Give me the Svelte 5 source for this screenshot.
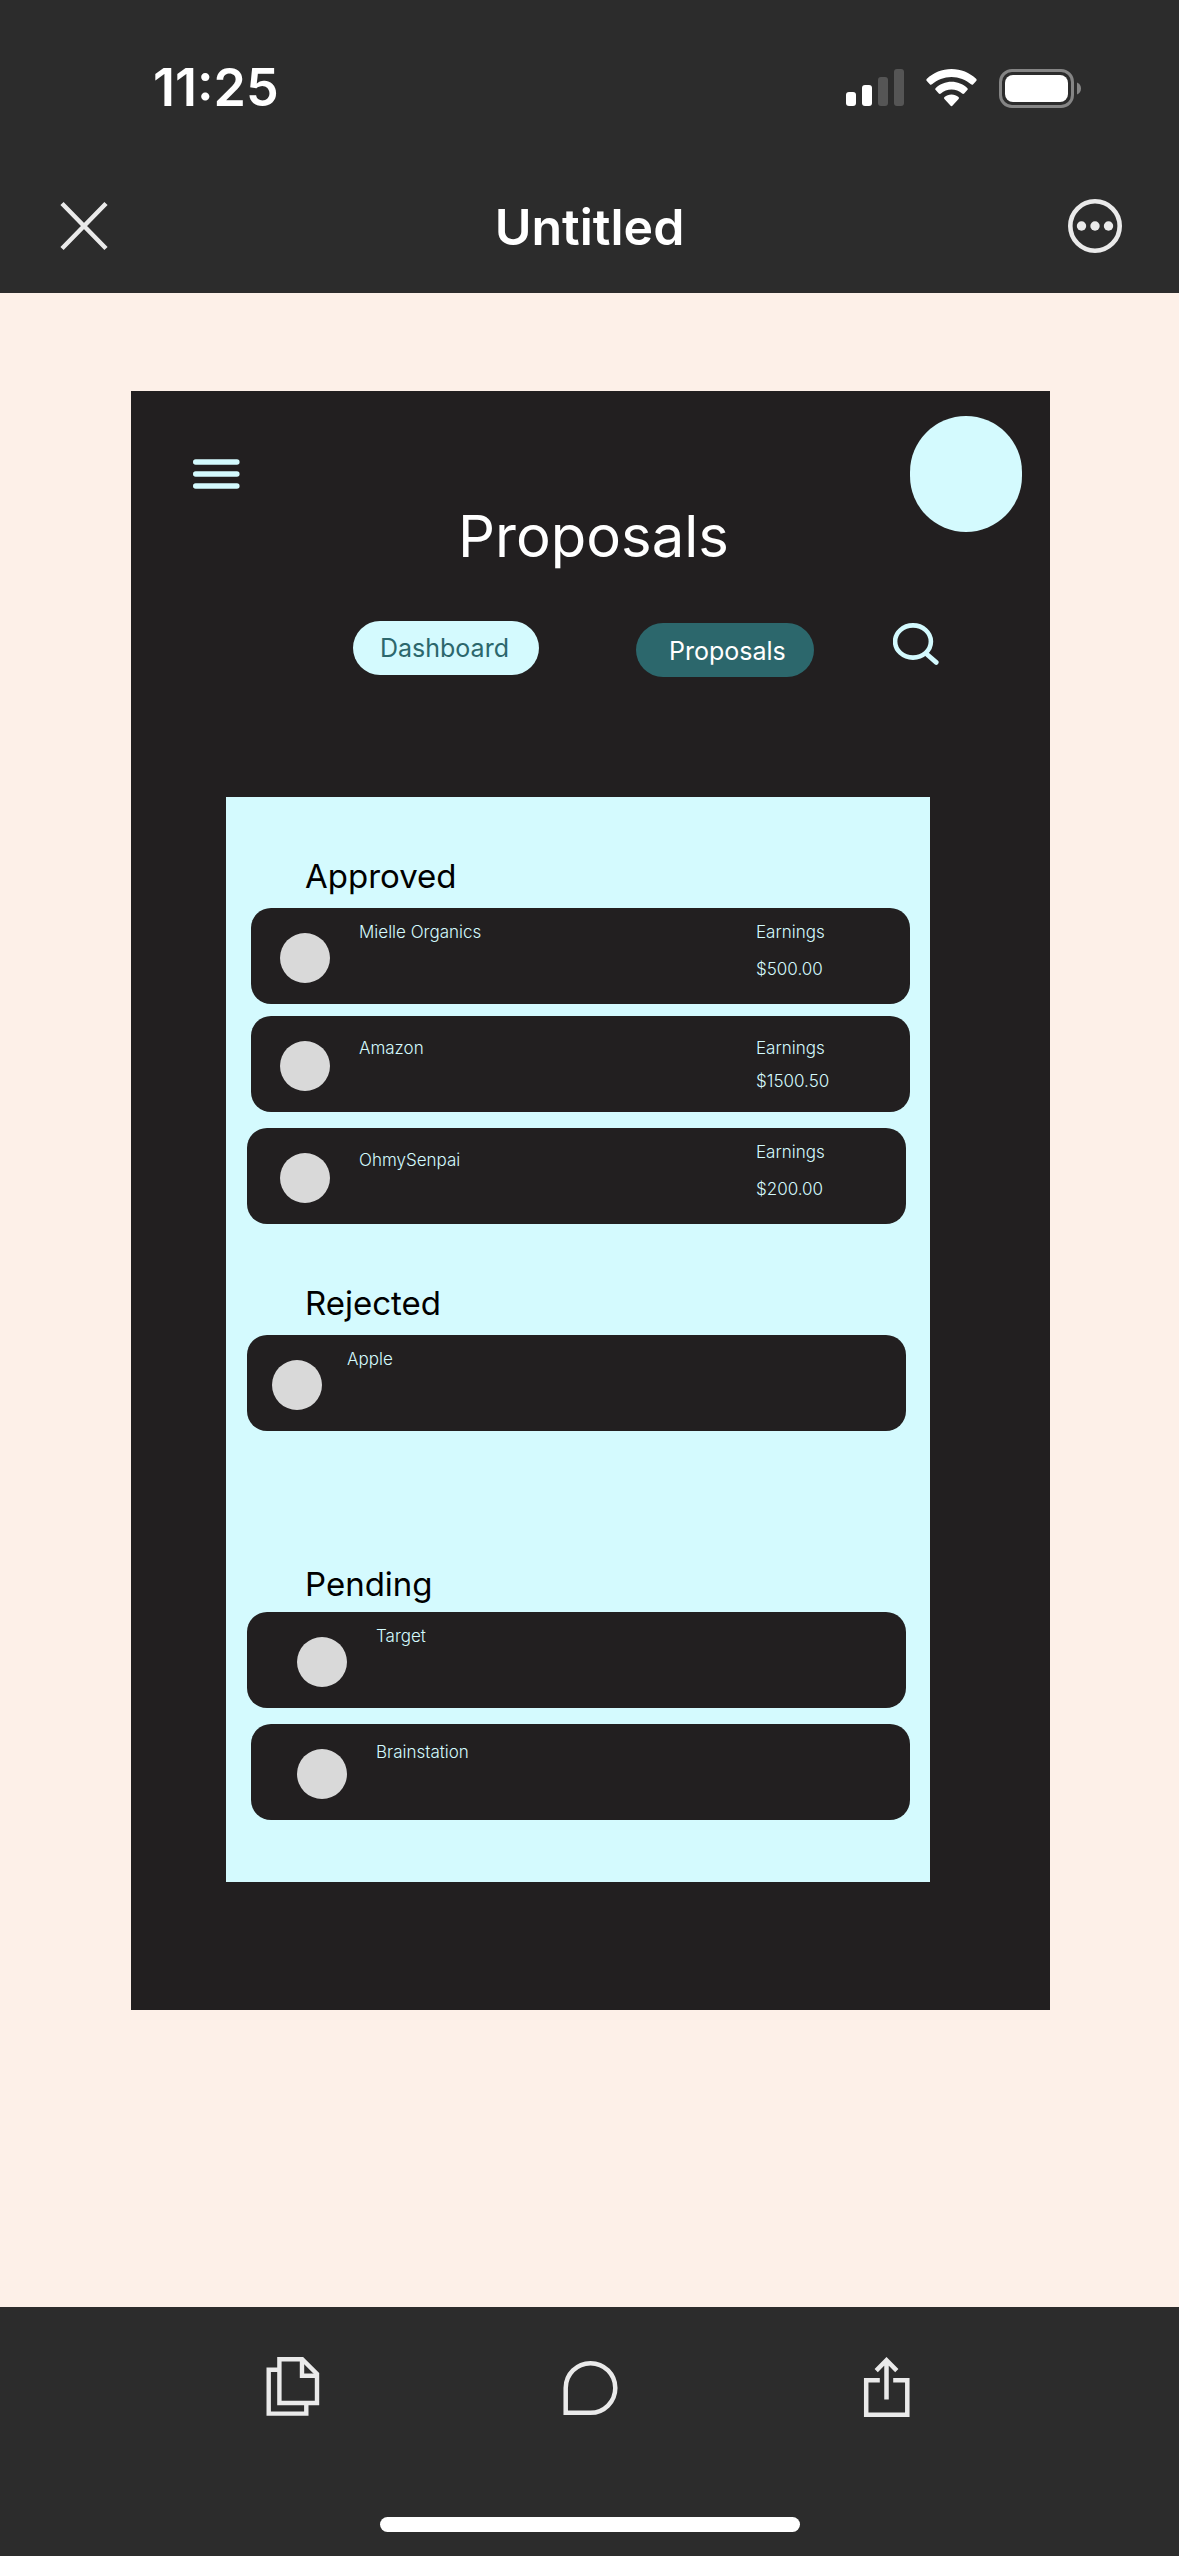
<script>
  const sections = [
    {
      title: 'Approved',
      id: 'approved',
      items: [
        { name: 'Mielle Organics', amount: '$500.00', row: '', text: 'high', sum: 'high' },
        { name: 'Amazon', amount: '$1500.50', row: '', text: 'low', sum: 'low' },
        { name: 'OhmySenpai', amount: '$200.00', row: 'left', text: 'low', sum: 'high' }
      ]
    },
    {
      title: 'Rejected',
      id: 'rejected',
      items: [{ name: 'Apple', row: 'left outdent', text: 'high' }]
    },
    {
      title: 'Pending',
      id: 'pending',
      items: [
        { name: 'Target', row: 'left indent', text: 'high' },
        { name: 'Brainstation', row: 'indent', text: 'mid' }
      ]
    }
  ];
</script>

<div class="app">
  <header class="top">
    <div class="status">
      <time>11:25</time>
      <div class="indicators">
        <svg width="58" height="38" viewBox="0 0 58 38" role="img" aria-label="Signal">
          <rect x="0" y="23" width="10" height="14" rx="3" fill="#fff" />
          <rect x="16" y="16" width="10" height="21" rx="3" fill="#fff" />
          <rect x="32" y="8" width="10" height="29" rx="3" fill="#555" />
          <rect x="48" y="0" width="10" height="37" rx="3" fill="#555" />
        </svg>
        <svg width="51" height="38" viewBox="0 0 51 38" role="img" aria-label="Wi-Fi">
          <g fill="#fff">
            <path d="M25.500 0C35 0 43.600 3.700 50.100 9.700c.7.700.7 1.600.1 2.300l-3 3.200c-.6.700-1.500.7-2.200.1C39.800 10.700 33 7.900 25.500 7.900S11.200 10.700 6 15.300c-.7.600-1.600.6-2.200-.1L.8 12c-.6-.7-.6-1.600.1-2.300C7.400 3.700 16 0 25.500 0Z" />
            <path d="M25.500 12.800c6 0 11.500 2.300 15.700 6.100.7.600.7 1.500.1 2.200l-3.100 3.400c-.6.600-1.400.6-2.100.1-2.900-2.500-6.600-4-10.600-4s-7.700 1.500-10.600 4c-.7.500-1.500.5-2.100-.1l-3.100-3.400c-.6-.7-.6-1.600.1-2.200 4.200-3.800 9.700-6.100 15.700-6.100Z" />
            <path d="M25.500 25.500c2.700 0 5.100 1 7 2.600.6.600.6 1.400.1 2l-6 6.500c-.6.700-1.600.7-2.200 0l-6-6.500c-.5-.6-.5-1.400.1-2 1.900-1.600 4.300-2.600 7-2.600Z" />
          </g>
        </svg>
        <svg width="82" height="39" viewBox="0 0 82 39" role="img" aria-label="Battery">
          <rect x="1.500" y="1.500" width="72" height="36" rx="11.500" fill="none" stroke="#858585" stroke-width="3" />
          <rect x="6" y="6" width="63" height="27" rx="8" fill="#fff" />
          <path d="M78 13.500c2.500 1 4 3.300 4 6s-1.500 5-4 6Z" fill="#858585" />
        </svg>
      </div>
    </div>
    <div class="titlebar">
      <button type="button" aria-label="Close">
        <svg width="54" height="54" viewBox="0 0 54 54">
          <path d="M5 4.500 49 49.500M49 4.500 5 49.500" stroke="#eaeaea" stroke-width="4.500" />
        </svg>
      </button>
      <h1>Untitled</h1>
      <button type="button" aria-label="More options">
        <svg width="54" height="54" viewBox="0 0 54 54">
          <circle cx="27" cy="27" r="24.700" fill="none" stroke="#eaeaea" stroke-width="4.600" />
          <g fill="#eaeaea">
            <circle cx="13.500" cy="27" r="4.700" />
            <circle cx="27" cy="27" r="4.700" />
            <circle cx="40.500" cy="27" r="4.700" />
          </g>
        </svg>
      </button>
    </div>
  </header>

  <main class="canvas">
    <article class="board">
      <div class="board-top">
        <button type="button" aria-label="Menu">
          <svg width="48" height="32" viewBox="0 0 48 32">
            <path d="M2.700 4H43.900M2.700 16H43.900M2.700 28H43.900" stroke="#d4fafe" stroke-width="5.400" stroke-linecap="round" />
          </svg>
        </button>
        <span class="profile"></span>
      </div>
      <h2>Proposals</h2>
      <nav class="tabs">
        <a class="tab light" href="#dashboard">Dashboard</a>
        <a class="tab dark" href="#proposals" aria-current="page">Proposals</a>
        <button type="button" class="search" aria-label="Search">
          <svg width="46" height="42" viewBox="0 0 46 42">
            <ellipse cx="20" cy="18.500" rx="17.900" ry="16.100" fill="none" stroke="#d4fafe" stroke-width="4.600" />
            <path d="M33 30.500 43.200 39.400" stroke="#d4fafe" stroke-width="4.800" stroke-linecap="round" />
          </svg>
        </button>
      </nav>

      <div class="panel">
        {#each sections as section}
          <section class={section.id}>
            <h3>{section.title}</h3>
            <ul>
              {#each section.items as item}
                <li class="card {item.row}">
                  <span class="avatar"></span>
                  <span class="name {item.text}">{item.name}</span>
                  {#if item.amount}
                    <span class="earnings {item.sum}">
                      <span>Earnings</span>
                      <span>{item.amount}</span>
                    </span>
                  {/if}
                </li>
              {/each}
            </ul>
          </section>
        {/each}
      </div>
    </article>
  </main>

  <footer>
    <div class="tools">
      <button type="button" aria-label="Pages">
        <svg width="60" height="60" viewBox="0 0 60 60" fill="none" stroke="#eaeaea" stroke-width="4.400">
          <path d="M16.400 12.700H5.700V56.600H43.300V46" />
          <path d="M16.400 2.200H39.200L54 17V46H16.400Z" />
          <path d="M39 2.200V18.800H54" />
        </svg>
      </button>
      <button type="button" aria-label="Comment">
        <svg width="60" height="60" viewBox="0 0 60 60" fill="none" stroke="#eaeaea" stroke-width="4.500">
          <path d="M5.700 55.800V31a24.800 24.800 0 1 1 24.800 24.800Z" />
        </svg>
      </button>
      <button type="button" aria-label="Share">
        <svg width="60" height="60" viewBox="0 0 60 60" fill="none" stroke="#eaeaea" stroke-width="4.500">
          <path d="M22.800 23.300H9.200V57.800H50.300V23.300H36.200" />
          <path d="M29.500 42.500V4M19.200 13.700 29.500 3.200 39.800 13.700" />
        </svg>
      </button>
    </div>
    <div class="home"></div>
  </footer>
</div>

<style>
  :global(body) {
    margin: 0;
    background: #fdf0e8;
  }
  .app {
    display: flex;
    flex-direction: column;
    min-height: 100vh;
    font-family: Inter, 'Liberation Sans', sans-serif;
    font-optical-sizing: none;
    color: #fff;
  }
  h1, h2, h3, ul {
    margin: 0;
    padding: 0;
  }
  ul {
    list-style: none;
  }
  button {
    display: block;
    padding: 0;
    border: 0;
    background: none;
    cursor: pointer;
  }
  svg {
    display: block;
  }

  .top {
    background: #2c2c2c;
    padding-bottom: 17px;
  }
  .status {
    display: flex;
    align-items: center;
    justify-content: space-between;
    height: 176px;
    padding: 0 98px 0 153px;
  }
  time {
    font-size: 52px;
    font-weight: 600;
    line-height: 60px;
  }
  .indicators {
    display: flex;
    align-items: center;
    gap: 22px;
  }
  .titlebar {
    display: grid;
    grid-template-columns: 1fr auto 1fr;
    align-items: center;
    height: 100px;
    padding: 0 57px;
  }
  .titlebar button:last-child {
    justify-self: end;
  }
  .titlebar button:first-child {
    justify-self: start;
  }
  h1 {
    padding-top: 2px;
    font-size: 50px;
    font-weight: 600;
    line-height: 60px;
  }

  .canvas {
    flex: 1;
    padding: 98px 129px 98px 131px;
  }
  .board {
    background: #221f20;
    padding-bottom: 128px;
  }
  .board-top {
    display: flex;
    align-items: center;
    justify-content: space-between;
    padding: 25px 28px 0 62px;
  }
  .profile {
    width: 112px;
    height: 116px;
    border-radius: 56px;
    background: #d4fafe;
  }
  h2 {
    margin-top: -26px;
    padding-left: 6px;
    text-align: center;
    font-size: 58px;
    font-weight: 400;
    line-height: 60px;
  }
  .tabs {
    display: flex;
    align-items: flex-start;
    margin-top: 55px;
    padding-left: 222px;
  }
  .tab {
    box-sizing: border-box;
    height: 54px;
    border-radius: 27px;
    font-size: 25px;
    line-height: 54px;
    text-decoration: none;
  }
  .light {
    width: 186px;
    padding-left: 27px;
    background: #d4fafe;
    color: #2c676c;
  }
  .dark {
    width: 178px;
    margin: 2px 79px 0 97px;
    padding-left: 33px;
    background: #2c676c;
    color: #fff;
    line-height: 56px;
  }
  .search {
    margin-top: 2px;
  }

  .panel {
    margin: 120px 120px 0 95px;
    padding: 59px 20px 62px 21px;
    background: #d4fafe;
  }
  .rejected {
    margin-top: 59px;
  }
  .pending {
    margin-top: 133px;
  }
  h3 {
    margin-bottom: 12px;
    padding-left: 58px;
    color: #000;
    font-size: 33px;
    font-weight: 400;
    line-height: 40px;
  }
  .pending h3 {
    margin-bottom: 8px;
  }
  .card {
    display: flex;
    align-items: flex-start;
    height: 96px;
    margin: 0 0 0 4px;
    padding-left: 29px;
    border-radius: 20px;
    background: #221f20;
    color: #d4fafe;
    font-size: 17px;
    font-weight: 350;
    line-height: 20px;
  }
  .card + .card {
    margin-top: 12px;
  }
  .card + .left,
  .left + .card {
    margin-top: 16px;
  }
  .left {
    margin-right: 4px;
    margin-left: 0;
    padding-left: 33px;
  }
  .outdent {
    padding-left: 25px;
  }
  .indent {
    padding-left: 46px;
  }
  .left.indent {
    padding-left: 50px;
  }
  .avatar {
    width: 50px;
    height: 50px;
    margin: 25px 29px 0 0;
    border-radius: 50%;
    background: #d9d9d9;
  }
  .outdent .avatar {
    margin-right: 25px;
  }
  .name {
    padding-top: 14px;
  }
  .name.mid {
    padding-top: 18px;
  }
  .name.low {
    padding-top: 22px;
  }
  .earnings {
    display: flex;
    flex-direction: column;
    gap: 17px;
    width: 154px;
    margin-left: auto;
    padding-top: 14px;
  }
  .earnings.low {
    gap: 13px;
    padding-top: 22px;
  }
  .left .earnings {
    width: 150px;
  }

  footer {
    background: #2c2c2c;
    padding: 50px 0 24px;
  }
  .tools {
    display: grid;
    grid-template-columns: repeat(3, 1fr);
    justify-items: center;
    padding: 0 144px;
  }
  .home {
    width: 420px;
    height: 15px;
    margin: 100px auto 0;
    border-radius: 8px;
    background: #fff;
  }
</style>
